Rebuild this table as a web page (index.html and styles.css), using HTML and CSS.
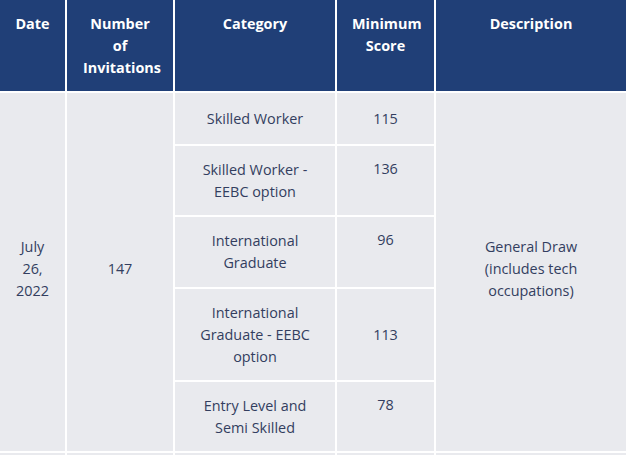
FILE: index.html
```html
<!DOCTYPE html>
<html lang="en">
<head>
<meta charset="utf-8">
<title>Draws</title>
<link rel="stylesheet" href="styles.css">
</head>
<body>
<table class="draws">
  <colgroup>
    <col class="c-date">
    <col class="c-num">
    <col class="c-cat">
    <col class="c-score">
    <col class="c-desc">
  </colgroup>
  <thead>
    <tr>
      <th>Date</th>
      <th class="num">Number of Invitations</th>
      <th>Category</th>
      <th>Minimum Score</th>
      <th class="desc">Description</th>
    </tr>
  </thead>
  <tbody>
    <tr class="r1">
      <td rowspan="5" class="span">July 26, 2022</td>
      <td rowspan="5" class="span">147</td>
      <td>Skilled Worker</td>
      <td>115</td>
      <td rowspan="5" class="span desc">General Draw (includes tech occupations)</td>
    </tr>
    <tr class="r2">
      <td>Skilled Worker - EEBC option</td>
      <td class="top">136</td>
    </tr>
    <tr class="r3">
      <td>International Graduate</td>
      <td class="top">96</td>
    </tr>
    <tr class="r4">
      <td>International Graduate - EEBC option</td>
      <td>113</td>
    </tr>
    <tr class="r5">
      <td>Entry Level and Semi Skilled</td>
      <td class="top">78</td>
    </tr>
    <tr class="r6">
      <td></td><td></td><td></td><td></td><td></td>
    </tr>
  </tbody>
</table>
</body>
</html>
```
FILE: styles.css
```css
html, body {
  margin: 0;
  padding: 0;
  background: #ffffff;
}

body {
  font-family: "Open Sans", "Noto Sans", sans-serif;
  font-size: 14.4px;
  line-height: 22px;
  color: #333e5f;
}

.draws {
  width: 626px;
  table-layout: fixed;
  border-collapse: collapse;
  border-style: hidden;
}

.c-date { width: 66px; }
.c-num { width: 108px; }
.c-cat { width: 162px; }
.c-score { width: 99px; }
.c-desc { width: 191px; }

.draws th,
.draws td {
  border: 2px solid #ffffff;
  text-align: center;
  padding: 12px 15px;
}

.draws th {
  background: #203f77;
  color: #ffffff;
  font-weight: 700;
  vertical-align: top;
  padding: 13px 15px 12px;
}

.draws th.num {
  padding-left: 16px;
  padding-right: 16px;
}

.draws td {
  background: #e9eaee;
  vertical-align: middle;
}

.draws th.desc,
.draws td.desc {
  padding-left: 20px;
  padding-right: 20px;
}

.draws td.span {
  padding-bottom: 18px;
}

.draws td.top {
  vertical-align: top;
}

.r1 { height: 53px; }
.r2 { height: 71px; }
.r3 { height: 72px; }
.r4 { height: 93px; }
.r5 { height: 71px; }
.r6 { height: 12px; }
.r6 td { padding: 0; }
```
